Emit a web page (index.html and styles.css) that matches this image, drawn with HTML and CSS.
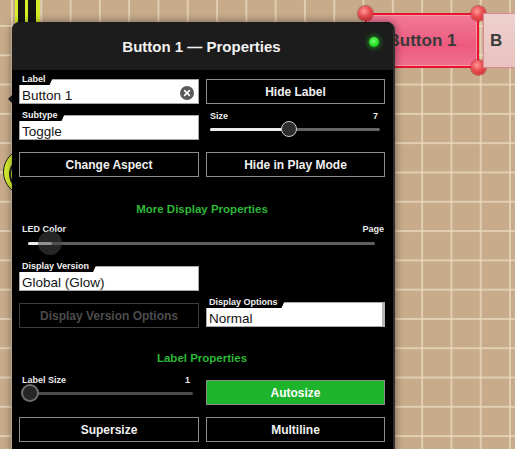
FILE: index.html
```html
<!DOCTYPE html>
<html lang="en">
<head>
<meta charset="utf-8">
<title>Button 1 — Properties</title>
<link rel="stylesheet" href="styles.css">
</head>
<body>
<main class="canvas">
  <!-- widgets laid out on the editor canvas -->
  <div class="wire"></div>
  <div class="lamp"><div class="lamp-ring"></div></div>
  <div class="nub"></div>

  <div class="widget widget-selected">
    <span class="widget-text">Button 1</span>
    <i class="handle h-tl"></i>
    <i class="handle h-tr"></i>
    <i class="handle h-br"></i>
  </div>
  <div class="widget widget-next"><span class="widget-text">B</span></div>

  <!-- properties inspector -->
  <section class="panel">
    <header class="titlebar">
      <h1 class="title">Button 1 — Properties</h1>
      <span class="led"></span>
    </header>

    <div class="panel-body">
      <div class="row">
        <div class="field">
          <span class="tag">Label</span>
          <span class="value">Button 1</span>
          <svg class="clear" width="14" height="14" viewBox="0 0 14 14">
            <circle cx="7" cy="7" r="7" fill="#5a5a5a"/>
            <path d="M4.6 4.6 L9.4 9.4 M9.4 4.6 L4.6 9.4" stroke="#fff" stroke-width="1.6" stroke-linecap="round"/>
          </svg>
        </div>
        <button class="btn">Hide Label</button>
      </div>

      <div class="row row-gap">
        <div class="field">
          <span class="tag">Subtype</span>
          <span class="value">Toggle</span>
        </div>
        <div class="slider slider-size">
          <div class="slider-head"><span>Size</span><span>7</span></div>
          <div class="track-wrap">
            <div class="track">
              <div class="fill" style="width:46.5%"></div>
              <div class="knob" style="left:46.5%"></div>
            </div>
          </div>
        </div>
      </div>

      <div class="row row-gap-lg">
        <button class="btn">Change Aspect</button>
        <button class="btn">Hide in Play Mode</button>
      </div>

      <h2 class="section">More Display Properties</h2>

      <div class="slider slider-led">
        <div class="slider-head"><span>LED Color</span><span>Page</span></div>
        <div class="track-wrap">
          <div class="track">
            <div class="fill" style="width:24px"></div>
            <div class="knob knob-ghost" style="left:22px"></div>
          </div>
        </div>
      </div>

      <div class="row row-version">
        <div class="field">
          <span class="tag">Display Version</span>
          <span class="value">Global (Glow)</span>
        </div>
      </div>

      <div class="row row-options">
        <button class="btn btn-disabled" disabled>Display Version Options</button>
        <div class="field field-scroll">
          <span class="tag">Display Options</span>
          <span class="value">Normal</span>
        </div>
      </div>

      <h2 class="section section-label">Label Properties</h2>

      <div class="row row-labelsize">
        <div class="slider slider-labelsize">
          <div class="slider-head"><span>Label Size</span><span>1</span></div>
          <div class="track-wrap">
            <div class="track">
              <div class="knob knob-dark" style="left:0"></div>
            </div>
          </div>
        </div>
        <button class="btn btn-on">Autosize</button>
      </div>

      <div class="row row-gap-lg">
        <button class="btn">Supersize</button>
        <button class="btn">Multiline</button>
      </div>
    </div>
  </section>
</main>
</body>
</html>
```

FILE: styles.css
```css
html, body {
  margin: 0;
  padding: 0;
}

body {
  width: 515px;
  height: 449px;
  overflow: hidden;
  font-family: "Liberation Sans", Arial, sans-serif;
}

/* ---------- editor canvas ---------- */
.canvas {
  position: relative;
  width: 515px;
  height: 449px;
  overflow: hidden;
  background-color: #c7ab8b;
  background-image:
    linear-gradient(to right, rgba(236, 218, 192, 0.75) 1.5px, transparent 1.5px),
    linear-gradient(to bottom, rgba(236, 218, 192, 0.75) 1.5px, transparent 1.5px);
  background-size: 29.3px 29.3px;
  background-position: 11px 25px;
}

.wire {
  position: absolute;
  left: 15px;
  top: 0;
  width: 25px;
  height: 80px;
  background: linear-gradient(to right,
    #d6ee2a 0 3px, #141414 3px 10px,
    #d6ee2a 10px 13px, #141414 13px 21px,
    #d6ee2a 21px 25px);
}

.lamp {
  position: absolute;
  left: 3px;
  top: 148px;
  width: 48px;
  height: 48px;
  box-sizing: border-box;
  border-radius: 50%;
  background: #d8ee30;
  border: 1.5px solid #1a1a1a;
}

.lamp-ring {
  position: absolute;
  left: 5px;
  top: 8px;
  width: 30px;
  height: 30px;
  border-radius: 50%;
  border: 2px solid #222;
}

.nub {
  position: absolute;
  left: 8px;
  top: 95px;
  width: 0;
  height: 0;
  border-top: 4px solid transparent;
  border-bottom: 4px solid transparent;
  border-right: 4px solid #1b1b1b;
}

.widget {
  position: absolute;
  top: 13px;
  height: 55px;
  box-sizing: border-box;
  display: flex;
  align-items: center;
  justify-content: center;
}

.widget-text {
  font-size: 17px;
  color: #3a3a3a;
  font-weight: bold;
}

.widget-selected {
  left: 365px;
  width: 114px;
  border: 2px solid #e8142e;
  background: linear-gradient(to bottom, #f27a96, #ec5a7e 60%, #f07090);
  box-shadow: inset 0 0 0 1px rgba(255, 180, 190, 0.6);
}

.widget-next {
  left: 483px;
  width: 60px;
  border: 1px solid #d98b96;
  background: linear-gradient(to bottom, #edd0cc, #e8c2bf);
  justify-content: flex-start;
  padding-left: 6px;
}

.handle {
  position: absolute;
  width: 15px;
  height: 15px;
  border-radius: 50%;
  background: radial-gradient(circle at 40% 35%, #ff9a9a 0, #e8484c 45%, #c52a30 100%);
  box-shadow: 0 0 0 1px rgba(160, 30, 30, 0.5);
}

.h-tl { left: -9px; top: -9px; }
.h-tr { right: -9px; top: -9px; }
.h-br { right: -9px; bottom: -9px; }

/* ---------- inspector panel ---------- */
.panel {
  position: absolute;
  left: 12px;
  top: 22px;
  width: 383px;
  height: 440px;
  box-sizing: border-box;
  background: #000;
  border-right: 2px solid #2f2f2f;
  border-radius: 8px 8px 0 0;
  box-shadow: 0 0 8px rgba(0, 0, 0, 0.45);
}

.titlebar {
  position: relative;
  height: 48px;
  background: #1c1c1c;
  border-radius: 8px 8px 0 0;
  display: flex;
  align-items: center;
  justify-content: center;
}

.title {
  margin: 0;
  font-size: 15px;
  font-weight: bold;
  color: #f2f2f2;
  padding-right: 2px;
}

.led {
  position: absolute;
  right: 14px;
  top: 15px;
  width: 10px;
  height: 10px;
  border-radius: 50%;
  background: radial-gradient(circle at 45% 40%, #6dff6d, #18d818 70%);
  box-shadow: 0 0 5px 1px rgba(40, 230, 40, 0.6);
}

.panel-body {
  padding: 9px 8px 0 7px;
}

.row {
  display: grid;
  grid-template-columns: 180px 179px;
  column-gap: 7px;
  align-items: start;
}

.row-gap { margin-top: 11px; }
.row-gap-lg { margin-top: 12px; }
.row-version { margin-top: 14px; }
.row-options { margin-top: 11px; }
.row-labelsize { margin-top: 10px; }

/* text fields with a tab label */
.field {
  position: relative;
  height: 25px;
  box-sizing: border-box;
  background: #fff;
  border: 1px solid #a8a8a8;
  padding: 7px 0 0 2px;
  font-size: 13.5px;
  line-height: 17px;
  color: #141414;
}

.field-scroll {
  border-right: 3px solid #b4b4b4;
}

.tag {
  position: absolute;
  left: -1px;
  top: -6px;
  height: 11px;
  padding: 0 9px 0 3px;
  background: #000;
  color: #f0f0f0;
  font-size: 9px;
  font-weight: bold;
  line-height: 10px;
  clip-path: polygon(0 0, 100% 0, calc(100% - 5px) 100%, 0 100%);
  border-radius: 0 0 3px 0;
}

.value {
  white-space: nowrap;
}

.clear {
  position: absolute;
  right: 4px;
  top: 6px;
}

/* buttons */
.btn {
  display: block;
  width: 100%;
  height: 25px;
  box-sizing: border-box;
  margin: 0;
  padding: 0;
  background: #000;
  border: 1px solid #8c8c8c;
  border-radius: 0;
  color: #f0f0f0;
  font-family: "Liberation Sans", Arial, sans-serif;
  font-size: 12px;
  font-weight: bold;
}

.btn-disabled {
  margin-top: 1px;
  border-color: #3c3c3c;
  color: #4c4c4c;
}

.btn-on {
  margin-top: 5px;
  background: #1db42c;
  border-color: #8c8c8c;
  color: #fff;
}

/* section headings */
.section {
  margin: 25px 0 0;
  text-align: center;
  font-size: 11.5px;
  line-height: 14px;
  font-weight: bold;
  color: #2db838;
}

.section-label {
  margin-top: 23px;
}

/* sliders */
.slider-head {
  display: flex;
  justify-content: space-between;
  font-size: 9px;
  line-height: 10px;
  font-weight: bold;
  color: #eaeaea;
}

.track-wrap {
  position: relative;
  height: 16px;
}

.track {
  position: absolute;
  top: 50%;
  height: 3px;
  margin-top: -1.5px;
  background: #666;
  border-radius: 2px;
}

.fill {
  position: absolute;
  left: 0;
  top: 0;
  height: 100%;
  background: #ececec;
  border-radius: 2px;
}

.knob {
  position: absolute;
  top: 50%;
  width: 16px;
  height: 16px;
  margin: -8px 0 0 -8px;
  box-sizing: border-box;
  border-radius: 50%;
  background: #2e2e2e;
  border: 1.5px solid #c8c8c8;
}

.slider-size {
  margin-top: -4px;
}
.slider-size .slider-head { padding: 0 7px 0 4px; }
.slider-size .track { left: 4px; right: 5px; }

.slider-led {
  margin-top: 8px;
}
.slider-led .slider-head { padding: 0 1px 0 3px; }
.slider-led .track-wrap { height: 18px; }
.slider-led .track { left: 9px; right: 10px; background: #5e5e5e; }

.knob-ghost {
  width: 24px;
  height: 24px;
  margin: -12px 0 0 -12px;
  border: none;
  background: rgba(70, 70, 70, 0.55);
}

.slider-labelsize .slider-head { padding: 0 9px 0 3px; }
.slider-labelsize .track { left: 11px; right: 6px; background: #4c4c4c; }

.knob-dark {
  width: 18px;
  height: 18px;
  margin: -9px 0 0 -9px;
  background: #262626;
  border: 2px solid #6e6e6e;
}
```
